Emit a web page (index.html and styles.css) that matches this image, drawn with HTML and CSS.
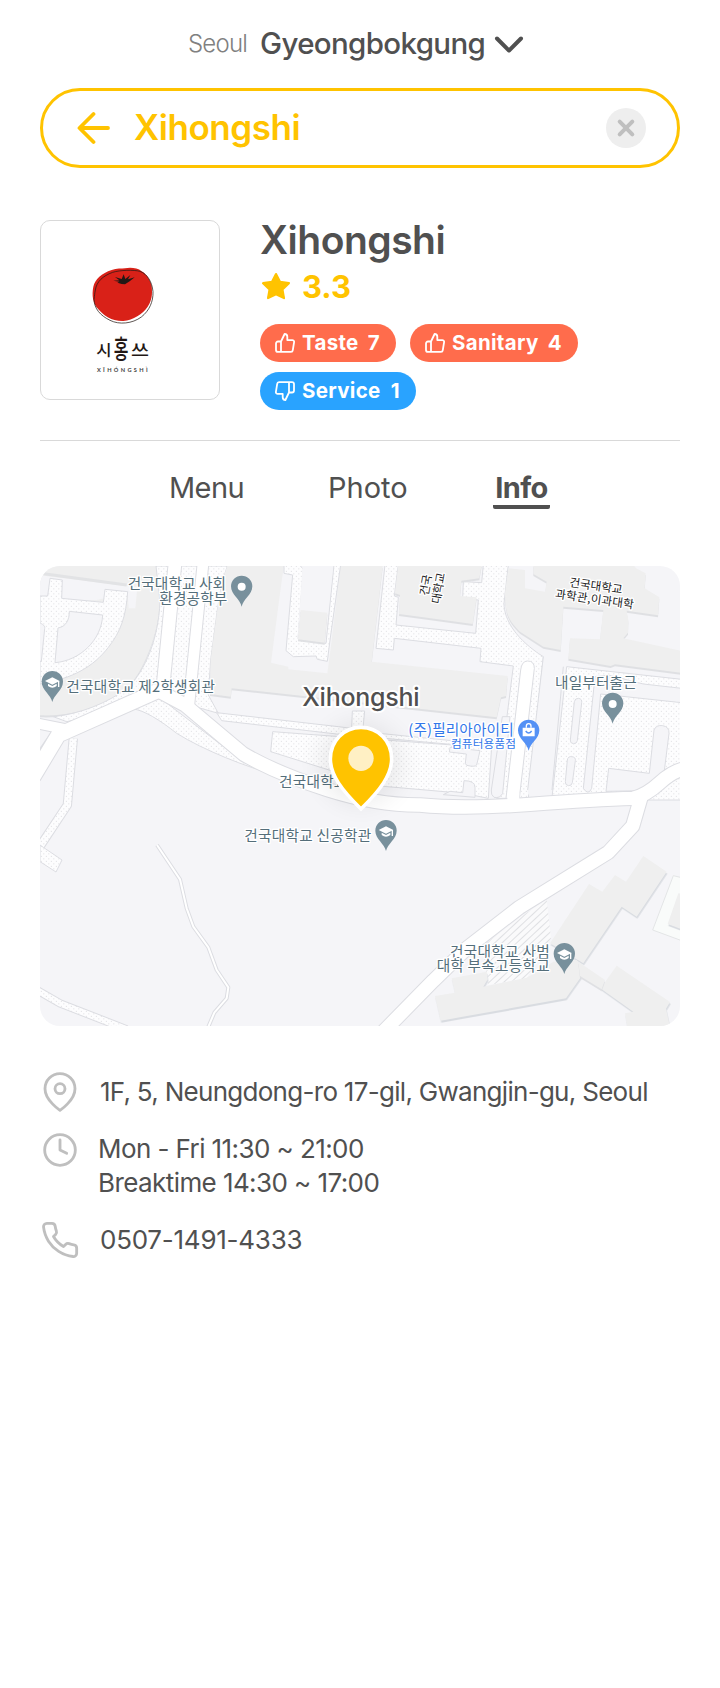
FILE: index.html
```html
<!DOCTYPE html>
<html lang="en">
<head>
<meta charset="utf-8">
<title>Xihongshi</title>
<link rel="stylesheet" href="styles.css">
</head>
<body>
<header class="location">
  <span class="city">Seoul</span>
  <span class="district">Gyeongbokgung</span>
  <svg class="chevron" width="30" height="20" viewBox="0 0 30 20"><path d="M3 4.500 15 16.500 27 4.500"/></svg>
</header>

<div class="search">
  <svg class="back" width="34" height="34" viewBox="0 0 34 34"><path d="M31 17H3M16.500 3 2.500 17l14 14"/></svg>
  <span class="query">Xihongshi</span>
  <svg class="clear" width="40" height="40" viewBox="0 0 40 40"><circle cx="20" cy="20" r="20"/><path d="m13.700 13.700 12.600 12.600m0-12.600L13.700 26.300"/></svg>
</div>

<section class="shop">
  <div class="logo">
    <svg width="178" height="178" viewBox="33 33 534 534">
      <path class="tomato" d="M190 230C195 208 215 190 245 180C260 175 275 176 285 175C300 172 322 173 335 184C352 194 361 211 365 228C368 255 365 272 353 290C338 312 310 330 280 333C245 334 222 318 205 298C188 280 185 255 190 230Z"/>
      <path class="tomato-line" d="M196 240C200 215 218 198 248 187C270 180 312 179 330 184C352 192 366 215 369 245C370 275 358 302 334 321C307 341 268 345 240 331C210 316 193 296 192 268C194 255 194 250 196 240Z"/>
      <path class="stem" d="M250 212 268 211 255 201 275 207 281 193 286 207 301 195 294 208 314 202 299 214 285 223 275 222 262 218 268 215Z"/>
      <text class="logo-ko" x="199" y="437" font-size="47" textLength="46" lengthAdjust="spacingAndGlyphs">시</text>
      <text class="logo-ko" transform="translate(251 446) scale(.6 1)" font-size="80">홍</text>
      <text class="logo-ko" x="303" y="438" font-size="48" textLength="54" lengthAdjust="spacingAndGlyphs">쓰</text>
      <text class="logo-en" x="201" y="486" font-size="17" textLength="152">XĪHÓNGSHÌ</text>
    </svg>
  </div>
  <div class="summary">
    <h1 class="name">Xihongshi</h1>
    <div class="rating">
      <svg width="30" height="28" viewBox="0.140 1.070 27.860 26"><path d="M15 3 18.700 10.200 27 11.400 21 17.200 22.400 25.300 15 21.800 7.600 25.300 9 17.200 3 11.400 11.300 10.200Z"/></svg>
      <span class="score">3.3</span>
    </div>
    <div class="tags">
      <span class="tag good"><svg width="20" height="20" viewBox="0 0 20 20"><path d="M6 8.500 9.600 1c1.500 0 2.700 1.200 2.700 2.700v3.400h5c1.200 0 2 1 1.800 2.100l-1.300 8c-.1 1-.9 1.700-1.800 1.700H3c-1.100 0-2-.9-2-2v-6.400c0-1.100.9-2 2-2h3v10.400"/></svg><b class="tag-name">Taste</b><b>7</b></span>
      <span class="tag good wide"><svg width="20" height="20" viewBox="0 0 20 20"><path d="M6 8.500 9.600 1c1.500 0 2.700 1.200 2.700 2.700v3.400h5c1.200 0 2 1 1.800 2.100l-1.300 8c-.1 1-.9 1.700-1.800 1.700H3c-1.100 0-2-.9-2-2v-6.400c0-1.100.9-2 2-2h3v10.400"/></svg><b class="tag-name">Sanitary</b><b>4</b></span>
      <span class="tag bad"><svg width="20" height="20" viewBox="0 0 20 20"><path d="M14 11.500 10.400 19c-1.500 0-2.700-1.200-2.700-2.700v-3.400h-5c-1.200 0-2-1-1.800-2.100l1.300-8C2.300 1.800 3.100 1.100 4 1.100h13c1.100 0 2 .9 2 2v6.400c0 1.100-.9 2-2 2h-3V1.100"/></svg><b class="tag-name">Service</b><b>1</b></span>
    </div>
  </div>
</section>

<nav class="tabs">
  <span class="tab menu">Menu</span>
  <span class="tab photo">Photo</span>
  <span class="tab active">Info</span>
</nav>

<div class="map">
<svg width="640" height="460" viewBox="30 18 1920 1380">
  <defs>
    <pattern id="dots" width="15" height="15" patternUnits="userSpaceOnUse"><rect width="15" height="15" fill="#fdfdfe"/><circle cx="4" cy="4" r="1.700" fill="#dddde2"/><circle cx="11.500" cy="11.500" r="1.700" fill="#dddde2"/></pattern>
    <pattern id="hatch" width="15" height="15" patternUnits="userSpaceOnUse" patternTransform="rotate(-43)"><rect width="15" height="15" fill="#fafafb"/><rect width="15" height="3" fill="#dfe0e3"/></pattern>
    <filter id="soft" x="-60%" y="-60%" width="220%" height="220%"><feGaussianBlur stdDeviation="38"/></filter>
    <g id="pin"><path d="M0 0C-4-22-32-36-32-61a32 32 0 0 1 64 0C32-36 4-22 0 0Z"/></g>
    <g id="cap" fill="#fff"><path d="M-22-63 0-74 22-63 0-52Z"/><path d="M-13-55 0-48 13-55V-48Q0-37-13-48Z"/><path d="M17-63h4v18h-4Z"/></g>
  </defs>

  <!-- plazas and buildings, north-west -->
  <path class="building" d="M30 18H380L390 120C385 250 320 360 290 385C220 440 130 470 30 466Z"/>
  <path class="ground" d="M30 46 290 78 322 82 316 145 296 145 293 100 200 120 90 125 30 110Z"/>
  <path class="seam" d="M30 40 290 75"/>
  <path class="plaza" d="M30 108H53L60 55 97 60 95 115 220 127 225 88 293 95C288 170 272 215 235 262C190 320 130 355 30 372Z"/>
  <path class="ground line" d="M118 154 218 165C215 240 150 302 75 308L84 204C108 200 118 180 118 154Z"/>
  <path class="ground line" d="M28 188C38 192 46 198 44 206L34 304H28Z"/>
  <path class="plaza" d="M378 18H592L575 70 562 150 542 300 535 405 565 460 495 440 400 420 110 485 70 470C150 462 230 430 295 383C345 330 385 240 390 125Z"/>
  <path class="building" d="M592 18H1058L1025 305 1433 348 1428 408 1413 412 1400 472 820 408 605 385 602 410 540 402 542 300 562 150 575 70Z"/>
  <path class="ground" d="M762 14H932L905 242 892 340 775 328V320L723 308 750 100Z"/>
  <path class="plaza" d="M762 14H808L820 28 804 236 888 250 912 14H932L900 240 892 304 862 298 858 288 790 290 768 272 788 45 762 40Z"/>
  <path class="ground" d="M818 14H910L884 250 803 238Z"/>
  <path class="building" d="M812 150 892 158 884 248 804 238Z"/>

  <!-- central blocks -->
  <g transform="translate(960 0)">
    <path class="plaza" d="M105 14 78 265 130 270 133 235 393 265 390 305 490 318 440 715H535L580 290C500 240 462 180 462 130L475 14Z"/>
    <path class="ground line" d="M145 14 133 108 145 112 138 195 377 220 385 120 338 115 340 65 395 68 400 14Z"/>
    <path class="building" d="M145 14 135 100 150 105 147 162 220 172 368 192 380 112 330 108 334 62 388 55 395 14Z"/>
    <path class="building" d="M475 25 525 30V85L585 95 590 65 550 42V14H850L858 25 887 40 884 85 928 112 924 166 830 152 835 180 834 218 820 235 992 272V338L795 313 782 318 655 296 660 235 750 238 760 150 640 140 632 270 580 260 510 215C475 180 465 160 465 100Z"/>
    <path class="plaza" d="M650 320 995 358V720H605L612 660Z"/>
    <path class="ground line" d="M735 350 775 345 880 372 995 385V428L752 402 725 685Q715 708 700 685Z"/>
    <path class="ground line" d="M673 425Q675 414 686 415Q697 417 695 428L682 542Q680 552 670 551Q660 550 661 540ZM652 600Q654 588 666 590Q678 592 676 602L667 668Q665 678 655 677Q645 675 646 665Z"/>
    <path class="ground line" d="M912 510Q918 494 938 497Q958 500 957 520L942 640 880 692 768 694 776 625 898 640Z"/>
    <path class="ground" d="M580 290 640 320 606 690Q600 716 560 714Q530 712 533 690Z"/>
    <path class="line" d="M580 290 533 690M640 320 606 690" fill="none"/>
    <path class="ground line" d="M457 470 480 470 458 700Q450 716 432 712Q422 705 424 690Z"/>
  </g>
  <path class="plaza" d="M560 458 925 500 965 505 967 453H1004L998 515 1345 550 1340 560 920 522 575 482Z"/>
  <path class="plaza" d="M728 515 1308 558H1385L1375 715 1300 700 1050 678 722 575Z"/>
  <path class="ground line" d="M1260 562 1350 572 1340 615Q1335 622 1310 616L1306 610 1309 582 1258 576ZM1302 662Q1335 662 1335 682V712L1240 704 1260 694 1298 698Z"/>
  <path class="plaza" d="M310 447 385 410 620 590 740 645C650 622 520 570 440 520C390 480 340 450 310 447Z"/>

  <!-- footpaths -->
  <path class="edge" stroke-width="28" d="M130 535 112 735 24 868"/><path class="dotted" stroke-width="22" d="M130 535 112 735 24 868"/>
  <path class="plaza" d="M30 855 40 862 96 900 78 936 30 905Z"/>
  <path class="edge" stroke-width="25" d="M20 1290 90 1330 290 1408"/><path class="dotted" stroke-width="19" d="M20 1290 90 1330 290 1408"/>
  <path class="edge" stroke-width="12" d="M381 855 450 958 470 1045 490 1100 535 1162 560 1230 595 1282 590 1315 553 1358 533 1405"/>
  <path class="road" stroke-width="6" d="M381 855 450 958 470 1045 490 1100 535 1162 560 1230 595 1282 590 1315 553 1358 533 1405"/>

  <!-- roads -->
  <g class="edge">
    <path stroke-width="44" d="M436 0 397 400"/><path stroke-width="38" d="M520 0 476 440"/>
    <path stroke-width="50" d="M10 650 85 525 385 392"/><path stroke-width="36" d="M10 488 110 508"/><path stroke-width="9" d="M20 585 65 520"/>
    <path stroke-width="46" d="M385 392 465 435 640 582Q740 640 890 688T1170 735Q1300 748 1500 733T1810 715Q1850 705 1890 668T1970 625"/>
    <path stroke-width="46" d="M1835 705 1808 798 1735 877 1467 1043 1310 1165 1210 1262 1060 1415"/>
  </g>
  <path class="road line" d="M1428 715 1472 330Q1475 303 1493 303Q1513 303 1513 325L1468 715Z"/>
  <g class="road">
    <path stroke-width="38" d="M436 0 397 400"/><path stroke-width="32" d="M520 0 476 440"/>
    <path stroke-width="44" d="M10 650 85 525 385 392"/><path stroke-width="30" d="M10 488 110 508"/>
    <path stroke-width="40" d="M385 392 465 435 640 582Q740 640 890 688T1170 735Q1300 748 1500 733T1810 715Q1850 705 1890 668T1970 625"/>
    <path stroke-width="40" d="M1835 705 1808 798 1735 877 1467 1043 1310 1165 1210 1262 1060 1415"/>
    <path stroke-width="36" d="M1450 700V735"/>
  </g>

  <!-- school grounds, south-east -->
  <g transform="translate(960 690)">
    <path fill="url(#hatch)" d="M590 330 603 445 530 565 415 585 395 470 520 375Z"/>
    <path class="building tall" d="M717 282 757 305 795 255 828 275 880 198 950 245 860 380 815 350 700 520 600 460Z"/>
    <path class="building tall" d="M255 618 315 608 305 565 410 545 413 568 400 590 530 563 610 515 680 510 755 590 800 527 960 636 948 656 960 712H832L825 670 850 665 755 598 695 558 648 625 272 692Z"/>
    <path class="building" d="M685 515 765 570 755 598 690 558Z"/>
    <path fill="#f9fbfa" stroke="#e3e5e6" stroke-width="3" d="M970 257 995 263V452L908 420Z"/>
    <path class="building tall" d="M985 310 995 312V418L953 402Z"/>
  </g>

  <!-- place markers -->
  <g fill="#78909c">
    <use href="#pin" x="635" y="140"/><use href="#pin" x="67" y="426"/><use href="#pin" x="1748" y="491"/>
    <use href="#pin" x="1068" y="873"/><use href="#pin" x="1603" y="1242"/>
  </g>
  <use href="#pin" x="1496" y="572" fill="#5491f5"/>
  <circle cx="635" cy="80" r="12" fill="#fff"/><circle cx="1748" cy="432" r="12" fill="#fff"/>
  <use href="#cap" x="67" y="426"/><use href="#cap" x="1068" y="873"/><use href="#cap" x="1603" y="1242"/>
  <path d="M1478 503h36v26h-36Z" fill="#fff"/><path d="M1489 503v-5a7 7 0 0 1 14 0v5" fill="none" stroke="#fff" stroke-width="4"/><path d="M1487 513q9 12 18 0" fill="none" stroke="#5491f5" stroke-width="4"/>

  <g class="label">
    <text x="293" y="88" textLength="295">건국대학교 사회</text>
    <text x="388" y="133" textLength="204">환경공학부</text>
    <text x="109" y="396" textLength="446">건국대학교 제2학생회관</text>
    <text x="747" y="682" textLength="205">건국대학교</text>
    <text x="1575" y="385" textLength="245">내일부터출근</text>
    <text x="643" y="843" textLength="381">건국대학교 신공학관</text>
    <text x="1260" y="1190" textLength="299">건국대학교 사범</text>
    <text x="1220" y="1234" textLength="339">대학 부속고등학교</text>
  </g>
  <g class="label blue">
    <text x="1135" y="524" textLength="316">(주)필리아아이티</text>
    <text class="small" x="1263" y="563" textLength="195">컴퓨터용품점</text>
  </g>
  <g class="label campus">
    <text transform="translate(1194 109) rotate(-80)" textLength="64">건국</text>
    <text transform="translate(1229 133) rotate(-80)" textLength="94">대학교</text>
    <text transform="translate(1617 79) rotate(8)" textLength="160">건국대학교</text>
    <text transform="translate(1574 113) rotate(8)" textLength="238">과학관,이과대학</text>
  </g>

  <!-- selected shop -->
  <circle cx="993" cy="610" r="120" fill="#000" opacity=".08" filter="url(#soft)"/>
  <path class="shop-pin" d="M993 502C1045 502 1085 543 1085 597C1085 645 1051 690 993 747C935 690 901 645 901 597C901 543 941 502 993 502Z"/>
  <circle cx="993" cy="595" r="38" fill="#fff0c4"/>
  <text class="shop-label" x="817" y="437" textLength="352">Xihongshi</text>
</svg>
</div>

<section class="details">
  <div class="detail address">
    <svg width="40" height="40" viewBox="0 0 24 24"><path d="M21 10c0 7-9 13-9 13s-9-6-9-13a9 9 0 0 1 18 0Z"/><circle cx="12" cy="10" r="3"/></svg>
    <p>1F, 5, Neungdong-ro 17-gil, Gwangjin-gu, Seoul</p>
  </div>
  <div class="detail hours">
    <svg width="40" height="40" viewBox="0 0 24 24"><circle cx="12" cy="12" r="9.200"/><path d="M12 6v6l4 2"/></svg>
    <p>Mon - Fri 11:30 ~ 21:00<br>Breaktime 14:30 ~ 17:00</p>
  </div>
  <div class="detail phone">
    <svg width="40" height="40" viewBox="0 0 24 24"><path d="M22 16.920v3a2 2 0 0 1-2.180 2 19.790 19.790 0 0 1-8.630-3.070 19.500 19.500 0 0 1-6-6 19.790 19.790 0 0 1-3.070-8.670A2 2 0 0 1 4.110 2h3a2 2 0 0 1 2 1.720c.127.960.361 1.903.7 2.810a2 2 0 0 1-.45 2.110L8.090 9.910a16 16 0 0 0 6 6l1.270-1.270a2 2 0 0 1 2.110-.45c.907.339 1.850.573 2.810.7A2 2 0 0 1 22 16.920Z"/></svg>
    <p>0507-1491-4333</p>
  </div>
</section>
</body>
</html>
```
FILE: styles.css
```css
* { box-sizing: border-box; }
body {
  margin: 0;
  height: 1688px;
  padding: 24px 40px 0;
  background: #fff;
  color: #505050;
  font-family: Inter, "Noto Sans CJK KR", sans-serif;
}
svg { display: block; flex: none; }
h1, p { margin: 0; font-weight: inherit; }

.location { display: flex; align-items: center; height: 40px; padding-left: 148px; }
.city { width: 72px; padding-bottom: 1px; font-size: 24px; font-weight: 300; letter-spacing: -0.8px; color: #808080; }
.district { width: 234px; padding-bottom: 2px; font-size: 29.5px; font-weight: 500; letter-spacing: -0.65px; white-space: nowrap; }
.chevron path { fill: none; stroke: #505050; stroke-width: 4; stroke-linecap: round; stroke-linejoin: round; }

.search {
  display: flex;
  align-items: center;
  height: 80px;
  margin-top: 24px;
  padding: 0 31px 0 34px;
  border: 3px solid #ffc300;
  border-radius: 40px;
}
.back path { fill: none; stroke: #ffc300; stroke-width: 3.800; stroke-linecap: round; stroke-linejoin: round; }
.query { flex: 1; margin-left: 23px; padding-bottom: 2px; color: #ffc300; font-size: 35px; font-weight: 600; letter-spacing: -0.45px; }
.clear circle { fill: #eee; }
.clear path { fill: none; stroke: #bfbfbf; stroke-width: 4; stroke-linecap: round; }

.shop { display: flex; gap: 40px; height: 221px; margin-top: 52px; border-bottom: 1px solid #d9d9d9; }
.logo { width: 180px; height: 180px; border: 1px solid #d9d9d9; border-radius: 10px; }
.tomato { fill: #d92118; }
.tomato-line { fill: none; stroke: #231815; stroke-width: 2.200; }
.stem { fill: #231815; }
.logo-ko { fill: #231815; font-family: "Noto Sans CJK KR", sans-serif; font-weight: 500; }
.logo-en { fill: #444; font-family: Lato, sans-serif; font-weight: 700; }

.summary { flex: 1; }
.name { height: 40px; line-height: 40px; font-size: 39px; font-weight: 600; letter-spacing: -0.5px; }
.rating { display: flex; align-items: center; gap: 12px; height: 32px; margin-top: 10px; color: #ffc300; }
.rating path { fill: #ffc300; stroke: #ffc300; stroke-width: 2; stroke-linejoin: round; }
.score { font-size: 31px; font-weight: 700; }
.tags { display: flex; flex-wrap: wrap; gap: 10px 14px; margin-top: 22px; }
.tag {
  display: flex;
  align-items: center;
  justify-content: space-between;
  width: 136px;
  height: 38px;
  padding: 0 16px 0 15px;
  border-radius: 19px;
  color: #fff;
  font-size: 20.5px;
}
.tag b { padding-bottom: 2px; font-weight: 700; letter-spacing: 0.3px; }
.tag-name { flex: 1; margin-left: 7px; }
.tag svg path { fill: none; stroke: #fff; stroke-width: 1.800; stroke-linecap: round; stroke-linejoin: round; }
.good { background: #ff6c4c; }
.wide { width: 168px; }
.bad { width: 156px; background: #29a3ff; }

.tabs { display: flex; height: 125px; padding: 30px 0 0 129px; font-size: 29px; line-height: 34px; }
.tab { height: 38px; }
.menu { width: 159px; letter-spacing: -0.6px; }
.photo { width: 165px; }
.active { width: 57px; text-align: center; font-weight: 700; letter-spacing: -0.6px; border-bottom: 4px solid #505050; border-radius: 2px; }

.map { height: 460px; border-radius: 20px; overflow: hidden; background: #f5f5f8; }
.building { fill: #efefef; filter: drop-shadow(0 6px 0 #dfe0e3); }
.tall { filter: drop-shadow(2px 6px 0 #d9dce1); }
.ground { fill: #f5f5f8; }
.line { stroke: #dcdde2; stroke-width: 3; }
.seam { fill: none; stroke: #e2e3e5; stroke-width: 9; }
.plaza { fill: url(#dots); stroke: #dcdde2; stroke-width: 3; }
.dotted { fill: none; stroke: url(#dots); }
.edge { fill: none; stroke: #dcdde2; stroke-linejoin: round; }
.road { fill: none; stroke: #fff; stroke-linejoin: round; }
.road.line { fill: #fff; stroke: #dcdde2; }
.label text { font-family: "Noto Sans CJK KR", sans-serif; font-size: 44px; fill: #546e7a; stroke: #fff; stroke-width: 8px; stroke-linejoin: round; paint-order: stroke; }
.label.blue text { fill: #3277ea; }
.label text.small { font-size: 35px; }
.label.campus text { font-size: 35px; fill: #222; }
.shop-pin { fill: #ffc300; stroke: #fff; stroke-width: 11; }
.shop-label { font-size: 75px; font-weight: 500; fill: #505050; stroke: #fff; stroke-width: 12px; stroke-linejoin: round; paint-order: stroke; }

.details { padding-top: 46px; font-size: 26px; line-height: 34px; }
.detail { display: flex; align-items: flex-start; }
.detail svg path, .detail svg circle { fill: none; stroke: #bfbfbf; stroke-width: 1.700; stroke-linecap: round; stroke-linejoin: round; }
.detail p { white-space: nowrap; }
.address { height: 58px; gap: 20px; }
.address p { padding-top: 3px; letter-spacing: -0.71px; }
.hours { height: 90px; gap: 18px; }
.hours p { padding-top: 2px; letter-spacing: -0.58px; }
.phone { gap: 20px; }
.phone p { padding-top: 3px; letter-spacing: -0.25px; }
```
